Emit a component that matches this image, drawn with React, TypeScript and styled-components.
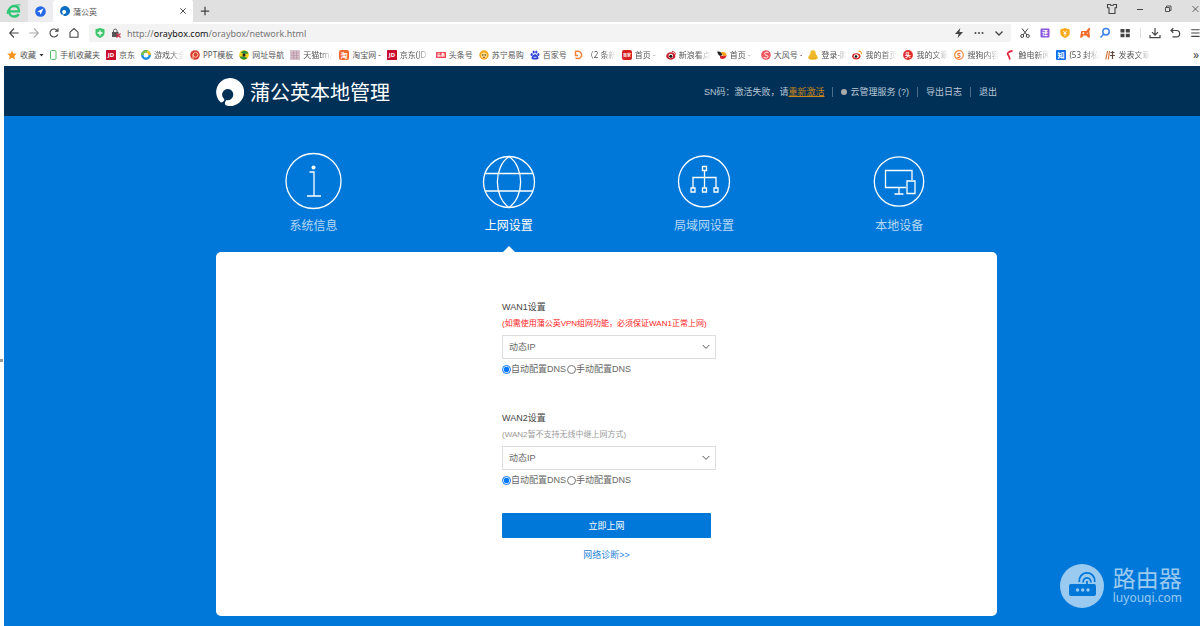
import React from "react";
import styled, { createGlobalStyle } from "styled-components";

const sans = `"Liberation Sans", "Noto Sans CJK SC", sans-serif`;
const ui = `"Noto Sans", "Noto Sans CJK SC", sans-serif`;

const GlobalStyle = createGlobalStyle`
  * { box-sizing: border-box; }
  body { margin: 0; background: #fff; font-family: ${sans}; }
  button, select, input { font-family: inherit; }
  h1, h2, p { margin: 0; font-weight: 400; }
`;

const Shell = styled.div`
  display: flex;
  flex-direction: column;
  min-height: 100vh;
  overflow-x: hidden;
`;

/* ---------- browser chrome ---------- */

const TabStrip = styled.div`
  display: flex;
  height: 22px;
  background: #e0e0e0;
  font-family: ${ui};
`;

const PlainButton = styled.button`
  display: flex;
  align-items: center;
  justify-content: center;
  padding: 0;
  border: 0;
  background: none;
  color: #444;
  flex-shrink: 0;
`;

const BrandButton = styled(PlainButton)`
  width: 28px;
`;

const PinnedTab = styled(PlainButton)`
  width: 25px;
  background: #ededf0;
`;

const ActiveTab = styled.div`
  display: flex;
  align-items: center;
  gap: 3px;
  width: 140px;
  padding: 0 6px 0 7px;
  background: #fff;
  color: #555;
  font-size: 8px;
  border-radius: 2px 2px 0 0;
`;

const TabTitle = styled.span`
  flex: 1;
`;

const NewTab = styled(PlainButton)`
  width: 24px;
`;

const WindowControls = styled.div`
  display: flex;
  margin-left: auto;
  height: 18px;
`;

const WindowButton = styled(PlainButton)<{ $edge?: boolean }>`
  width: ${(p) => (p.$edge ? 18 : 28)}px;
  justify-content: ${(p) => (p.$edge ? "flex-end" : "center")};
`;

const Toolbar = styled.div`
  display: flex;
  align-items: center;
  height: 22px;
  padding-left: 4px;
  background: #fff;
`;

const ToolButton = styled(PlainButton)<{ $edge?: boolean; $dim?: boolean }>`
  width: ${(p) => (p.$edge ? 15 : 20)}px;
  height: 20px;
  justify-content: ${(p) => (p.$edge ? "flex-end" : "center")};
  color: ${(p) => (p.$dim ? "#aaa" : "#444")};
`;

const AddressBar = styled.div`
  display: flex;
  align-items: center;
  flex: 1;
  height: 18px;
  margin: 0 4px 0 5px;
  padding: 0 2px 0 6px;
  gap: 6px;
  background: #f3f3f3;
  border-radius: 2px;
`;

const Url = styled.a`
  flex: 1;
  color: #777;
  font-family: ${ui};
  font-size: 9px;
  text-decoration: none;
  b {
    font-weight: 400;
    color: #111;
  }
`;

const AddressActions = styled.div`
  display: flex;
`;

const Divider = styled.span`
  width: 1px;
  height: 10px;
  margin: 0 4px 0 5px;
  background: #ddd;
`;

const Bookmarks = styled.nav`
  display: flex;
  align-items: center;
  gap: 6px;
  height: 22px;
  padding: 0 1px 0 7px;
  background: #fff;
  font-family: ${ui};
`;

const Bookmark = styled.a`
  display: flex;
  align-items: center;
  gap: 3px;
  flex-shrink: 0;
  color: #555;
  font-size: 8px;
  line-height: 12px;
  text-decoration: none;
  white-space: nowrap;
`;

const BookmarkName = styled.span<{ $fade?: number }>`
  overflow: hidden;
  ${(p) =>
    p.$fade &&
    `width: ${p.$fade}px; -webkit-mask-image: linear-gradient(90deg, #000 55%, transparent); mask-image: linear-gradient(90deg, #000 55%, transparent);`}
`;

const MoreBookmarks = styled(PlainButton)`
  margin-left: auto;
  font-size: 12px;
  line-height: 12px;
`;

/* ---------- router page ---------- */

const Viewport = styled.div`
  display: flex;
  flex: 1;
`;

const Gutter = styled.div`
  display: flex;
  align-items: center;
  width: 4px;
  padding-top: 28px;
  background: #fff;
`;

const Grip = styled.span`
  width: 3px;
  height: 3px;
  background: #999;
`;

const Site = styled.div`
  position: relative;
  display: flex;
  flex-direction: column;
  flex: 1;
  background: #0078d9;
`;

const Header = styled.header`
  height: 50px;
  padding-left: 9px;
  background: #003056;
`;

const Container = styled.div`
  width: 100%;
  max-width: 781px;
  margin: 0 auto;
`;

const HeaderRow = styled(Container)`
  display: flex;
  align-items: center;
  justify-content: space-between;
  height: 50px;
  padding-top: 2px;
`;

const Brand = styled.div`
  display: flex;
  align-items: center;
  gap: 6px;
  color: #fff;
`;

const BrandName = styled.h1`
  font-family: "Noto Sans CJK SC", sans-serif;
  font-size: 20px;
  line-height: 28px;
  font-weight: 400;
`;

const HeaderLinks = styled.div`
  display: flex;
  align-items: center;
  gap: 8px;
  color: #b9c8d6;
  font-size: 9px;
  line-height: 16px;
  white-space: nowrap;
`;

const HeaderLink = styled.a`
  display: flex;
  align-items: center;
  gap: 3px;
  color: inherit;
  text-decoration: none;
`;

const Retry = styled.a`
  color: #c8861a;
  text-decoration: underline;
`;

const Pipe = styled.span`
  width: 1px;
  height: 10px;
  background: #4d6e8a;
`;

const Dot = styled.span`
  width: 6px;
  height: 6px;
  border-radius: 50%;
  background: #aaa;
`;

const Main = styled.main`
  padding: 0 0 10px 9px;
`;

const Tabs = styled.nav`
  display: grid;
  grid-template-columns: repeat(4, 1fr);
`;

const TabLink = styled.a<{ $active?: boolean }>`
  position: relative;
  display: flex;
  flex-direction: column;
  align-items: center;
  gap: 8px;
  padding: 36px 0 18px;
  color: ${(p) => (p.$active ? "#fff" : "#b5d8f6")};
  font-size: 12px;
  line-height: 16px;
  text-decoration: none;
  svg {
    color: #fff;
  }
  &::after {
    content: "";
    display: ${(p) => (p.$active ? "block" : "none")};
    position: absolute;
    bottom: 0;
    border: 6px solid transparent;
    border-top-width: 0;
    border-bottom-color: #fff;
  }
`;

const Card = styled.div`
  padding: 47px 0 53px;
  background: #fff;
  border-radius: 5px;
`;

const Form = styled.form`
  width: 209px;
  margin: 0 auto;
  color: #666;
  font-size: 9px;
  line-height: 16px;
`;

const Group = styled.section`
  & + & {
    margin-top: 31px;
  }
`;

const GroupTitle = styled.h2`
  color: #444;
  font-size: 9px;
  line-height: 16px;
`;

const Hint = styled.p<{ $warn?: boolean }>`
  color: ${(p) => (p.$warn ? "#ff1a1a" : "#999")};
  font-size: 8px;
  line-height: 18px;
  white-space: nowrap;
`;

const SelectBox = styled.div`
  position: relative;
  width: 214px;
  margin-top: 2px;
  svg {
    position: absolute;
    right: 6px;
    top: 9px;
    pointer-events: none;
  }
`;

const Select = styled.select`
  display: block;
  appearance: none;
  width: 100%;
  height: 24px;
  padding: 0 6px;
  border: 1px solid #ddd;
  border-radius: 0;
  background: #fff;
  color: #666;
  font-size: 9px;
`;

const Radios = styled.div`
  display: flex;
  align-items: center;
  gap: 1px;
  height: 20px;
`;

const RadioLabel = styled.label`
  display: flex;
  align-items: center;
  white-space: nowrap;
`;

const Radio = styled.input`
  width: 9px;
  height: 9px;
  margin: 0;
  accent-color: #0075ff;
`;

const Submit = styled.button`
  display: block;
  width: 100%;
  height: 25px;
  margin-top: 23px;
  padding: 0;
  border: 0;
  border-radius: 1px;
  background: #0078d9;
  color: #fff;
  font-size: 9px;
`;

const Diagnose = styled.a`
  display: block;
  margin-top: 9px;
  color: #2a86d8;
  text-align: center;
  text-decoration: none;
`;

const Watermark = styled.div`
  position: absolute;
  right: 18px;
  bottom: 18px;
  display: flex;
  align-items: center;
  gap: 9px;
  color: #9bcaf1;
`;

const WatermarkText = styled.div`
  display: flex;
  flex-direction: column;
  padding-bottom: 3px;
  font-family: ${ui};
`;

const WatermarkName = styled.span`
  font-size: 23px;
  line-height: 26px;
`;

const WatermarkHost = styled.span`
  font-size: 12px;
  line-height: 14px;
`;

/* ---------- drawings ---------- */

const line = { fill: "none", stroke: "currentColor" } as const;

const Glyph = ({ size = 12, w = 1.1, children }: { size?: number; w?: number; children: React.ReactNode }) => (
  <svg width={size} height={size} viewBox="0 0 12 12" {...line} strokeWidth={w} aria-hidden="true">
    {children}
  </svg>
);

const OrayMark = ({ size, color }: { size: number; color: string }) => (
  <svg width={size} height={size} viewBox="0 0 28 28" aria-hidden="true">
    <path
      fill={color}
      d="M4.800 24.500A14 14 0 1 1 10.500 27.600C9.300 27 8.600 25.800 9 24.300L10.300 22A5.600 5.600 0 1 0 7 19.600L8.300 21.300C8.500 23 7 24.500 4.800 24.500z"
    />
  </svg>
);

type MarkName =
  | "star" | "phone" | "jd" | "ring" | "ppt" | "hao" | "tmall" | "tao" | "toutiao" | "lion"
  | "paw" | "dring" | "redbox" | "eye" | "fox" | "swirl" | "bell" | "weibo" | "redcircle"
  | "sogou" | "touch" | "zhi" | "publish";

const glyphText = (s: string, size: number, y: number, fill = "#fff") => (
  <text x="5" y={y} fontSize={size} fill={fill} textAnchor="middle" fontWeight="700">{s}</text>
);

const marks: Record<MarkName, React.ReactNode> = {
  star: <path fill="#f7931e" d="M5 .4l1.400 3 3.300.4-2.400 2.300.6 3.300L5 7.800 2.100 9.400l.6-3.300L.3 3.800l3.300-.4z" />,
  phone: <rect x="1.500" y=".6" width="5.500" height="8.800" rx="1" fill="none" stroke="#58b96b" />,
  jd: <><rect width="10" height="10" rx=".6" fill="#c8102e" />{glyphText("JD", 6, 7.3)}</>,
  ring: <><circle cx="5" cy="5" r="3.700" fill="none" stroke="#1e90e8" strokeWidth="2.400" /><path d="M1.300 5a3.700 3.700 0 0 1 5.500-3.200" fill="none" stroke="#7cc142" strokeWidth="2.400" /><path d="M6 1.500A3.700 3.700 0 0 1 8.700 5" fill="none" stroke="#f9c21b" strokeWidth="2.400" /></>,
  ppt: <><circle cx="5" cy="5" r="4.800" fill="#d93c33" /><circle cx="5.500" cy="4.800" r="2.400" fill="none" stroke="#ffc9a0" /><path d="M3 9V4" stroke="#ffc9a0" /></>,
  hao: <><circle cx="5" cy="5" r="4.800" fill="#f5cf1c" /><path d="M.5 6.500C2 10 6 10.500 8 8L5.500 6.500z" fill="#2c8f3c" /><path d="M9.500 3.500C8 0 4 0 2 2.500L4.500 4z" fill="#2c8f3c" /><circle cx="5" cy="5" r="1.500" fill="#222" /></>,
  tmall: <><rect width="10" height="10" fill="#d8c3cc" /><path d="M1 3h8M1 5.500h8M1 8h8M3.500 1v8M6.500 1v8" stroke="#b694a4" strokeWidth=".7" /></>,
  tao: <><rect width="10" height="10" rx="2" fill="#f2662b" />{glyphText("淘", 7, 7.700)}</>,
  toutiao: <><rect y="2" width="10" height="6" rx=".5" fill="#ee4350" />{glyphText("头条", 4, 6.500)}</>,
  lion: <><circle cx="5" cy="5" r="4.700" fill="#f6a81c" /><circle cx="5" cy="5.500" r="3" fill="#ffe08a" /><circle cx="3.800" cy="5" r=".7" fill="#222" /><circle cx="6.200" cy="5" r=".7" fill="#222" /><path d="M4 7.300h2" stroke="#b3392b" /></>,
  paw: <g fill="#2d43d8"><ellipse cx="1.700" cy="4.500" rx="1.100" ry="1.500" /><ellipse cx="3.700" cy="2" rx="1.100" ry="1.500" /><ellipse cx="6.300" cy="2" rx="1.100" ry="1.500" /><ellipse cx="8.300" cy="4.500" rx="1.100" ry="1.500" /><path d="M5 4.200c1.500 0 3.500 2.300 3.500 3.800S7 9.600 5 9.600 1.500 9.500 1.500 8 3.500 4.200 5 4.200z" /><path d="M3.500 7.300h3" stroke="#fff" strokeWidth=".8" /></g>,
  dring: <path d="M2 1.200h3a3.700 3.700 0 1 1-2.500 6.500M2.500 1.500v4h2.500" fill="none" stroke="#f0823a" strokeWidth="1.500" />,
  redbox: <><rect width="10" height="10" rx="2" fill="#d81e1e" />{glyphText("百家", 4, 6.500)}</>,
  eye: <><ellipse cx="4.800" cy="6" rx="4.600" ry="3.700" fill="#c2202b" /><circle cx="4.800" cy="6" r="2.300" fill="#fff" /><circle cx="4.800" cy="6.200" r="1.500" fill="#111" /><path d="M6 1.500c2 0 3.500 1 3.500 3" fill="none" stroke="#c2202b" /></>,
  fox: <><path d="M.3 1.500C3 1 5 2.500 5.500 5L3 6C1.500 5 .5 3.500.3 1.500z" fill="#222" /><path d="M4 2.500c3-1.500 6 .5 5.700 3.300L6 6z" fill="#f7a51c" /><path d="M3 6l6.500-.3C9 8.500 5.500 10 3 8z" fill="#d8262c" /></>,
  swirl: <><circle cx="5" cy="5" r="4.800" fill="#ef5560" /><path d="M7.500 2.500C5 1.500 3 3 4 4.500s3 .5 3 2S4.500 8.500 2.500 7.300" fill="none" stroke="#fff" /></>,
  bell: <><path d="M5 .3c1.900 0 2.700 1.300 2.700 3 0 1.800 2.100 2.500 2.100 4.400 0 1.400-1.800 2-4.800 2S.2 9.100.2 7.700c0-1.900 2.100-2.600 2.100-4.400 0-1.700.8-3 2.700-3z" fill="#f0b929" /><path d="M1.500 8h7" stroke="#dc9d1a" strokeWidth=".7" /></>,
  weibo: <><ellipse cx="4.300" cy="6.300" rx="4.200" ry="3.100" fill="#d92b2b" /><ellipse cx="4.300" cy="6.300" rx="2.500" ry="2" fill="#fff" /><circle cx="4" cy="6.500" r="1.300" fill="#111" /><path d="M6.500 1.200c2-.3 3.200 1 2.900 3" fill="none" stroke="#f29b1d" strokeWidth="1.100" /></>,
  redcircle: <><circle cx="5" cy="5" r="4.900" fill="#e02c2c" />{glyphText("头", 6, 7.200)}</>,
  sogou: <><circle cx="5" cy="5" r="4.300" fill="#fff" stroke="#f58a3c" strokeWidth="1.200" />{glyphText("S", 7, 7.500, "#f26a1b")}</>,
  touch: <path d="M7.500.8C3 1.500 1.500 4 3.500 5.300L5 9.500" fill="none" stroke="#e2243b" strokeWidth="1.700" />,
  zhi: <><rect width="10" height="10" rx="1" fill="#0f6ff0" />{glyphText("知", 7, 7.700)}</>,
  publish: <><path d="M2.500 1L.8 9.500M4.500 1L3.300 9.500" fill="none" stroke="#d9773f" strokeWidth="1.200" /><path d="M5.500 2.500h4M7.500 1v8M5 5.500h5" fill="none" stroke="#5f4a44" strokeWidth="1.200" /></>,
};

/* widths at which a long bookmark name fades out */
const short = 25;
const medium = 30;
const long = 32;

const bookmarks: { mark: MarkName; name: string; fade?: number }[] = [
  { mark: "jd", name: "京东" },
  { mark: "ring", name: "游戏大全", fade: medium },
  { mark: "ppt", name: "PPT模板" },
  { mark: "hao", name: "网址导航" },
  { mark: "tmall", name: "天猫tma", fade: medium },
  { mark: "tao", name: "淘宝网 -" },
  { mark: "jd", name: "京东(JD", fade: medium },
  { mark: "toutiao", name: "头条号" },
  { mark: "lion", name: "苏宁易购" },
  { mark: "paw", name: "百家号" },
  { mark: "dring", name: "（2 条新", fade: medium },
  { mark: "redbox", name: "首页 -", fade: short },
  { mark: "eye", name: "新浪看点", fade: long },
  { mark: "fox", name: "首页 -", fade: short },
  { mark: "swirl", name: "大风号 -" },
  { mark: "bell", name: "登录-腾", fade: short },
  { mark: "weibo", name: "我的首页", fade: long },
  { mark: "redcircle", name: "我的文章", fade: long },
  { mark: "sogou", name: "搜狗内容", fade: long },
  { mark: "touch", name: "触电新闻", fade: long },
  { mark: "zhi", name: "(53 封私", fade: medium },
  { mark: "publish", name: "发表文章", fade: long },
];

const Favicon = ({ mark, narrow }: { mark: MarkName; narrow?: boolean }) => (
  <svg width={narrow ? 7 : 10} height="10" viewBox={narrow ? "1 0 7 10" : "0 0 10 10"} aria-hidden="true">
    {marks[mark]}
  </svg>
);

const Chevron = () => (
  <svg width="8" height="6" viewBox="0 0 8 6" {...line} stroke="#555" aria-hidden="true">
    <path d="M.7 1L4 4.400 7.300 1" />
  </svg>
);

const navIcon = { width: 58, height: 58, viewBox: "0 0 58 58", ...line, strokeWidth: 1.3, "aria-hidden": true } as const;

const sections = [
  {
    name: "系统信息",
    icon: (
      <svg {...navIcon}>
        <circle cx="28.500" cy="29" r="27.500" />
        <circle cx="28.500" cy="15.500" r="2" fill="currentColor" stroke="none" />
        <path d="M24.500 20H29v24M22 44h14" />
      </svg>
    ),
  },
  {
    name: "上网设置",
    active: true,
    icon: (
      <svg {...navIcon}>
        <circle cx="29" cy="30" r="25.500" />
        <path d="M29 4.500C13.500 15 13.500 45 29 55.500M29 4.500C44.500 15 44.500 45 29 55.500M5 21.500h48M5 39h48" />
      </svg>
    ),
  },
  {
    name: "局域网设置",
    icon: (
      <svg {...navIcon}>
        <circle cx="29" cy="29.500" r="25.500" />
        <path d="M27.500 14.500h4v4h-4zM16 36h4v4h-4zM27.500 36h4v4h-4zM39 36h4v4h-4zM29.500 18.500V36M18 36V25.500h23V36" />
      </svg>
    ),
  },
  {
    name: "本地设备",
    icon: (
      <svg {...navIcon}>
        <circle cx="29" cy="29.500" r="24.700" />
        <path d="M36 35.500H15.500v-17H42v9.500M29 35.500V42M24.500 42h9M37 29h8v12.500h-8z" />
      </svg>
    ),
  },
];

const wans = [
  { id: "wan1", title: "WAN1设置", hint: "(如需使用蒲公英VPN组网功能，必须保证WAN1正常上网)", warn: true },
  { id: "wan2", title: "WAN2设置", hint: "(WAN2暂不支持无线中继上网方式)", warn: false },
];

const Browser = () => (
  <>
    <TabStrip>
      <BrandButton aria-label="浏览器">
        <svg width="16" height="16" viewBox="0 0 16 16" fill="none" stroke="#2dc672" aria-hidden="true">
          <path d="M3 8.300h10C13 4.800 11 3 8.200 3 5.200 3 3 5.200 3 8.200s2.200 5.300 5.200 5.300c2 0 3.600-.8 4.500-2.400" strokeWidth="2.300" />
          <path d="M1.500 11C0 7 7 .5 14.500 2" strokeWidth="1.200" />
        </svg>
      </BrandButton>
      <PinnedTab aria-label="导航">
        <svg width="11" height="11" viewBox="0 0 11 11" aria-hidden="true">
          <circle cx="5.500" cy="5.500" r="5.300" fill="#2567e8" />
          <path d="M8.500 2.500L2.300 5.400l2.500.8.8 2.500z" fill="#fff" />
        </svg>
      </PinnedTab>
      <ActiveTab>
        <OrayMark size={10} color="#0d6fc4" />
        <TabTitle>蒲公英</TabTitle>
        <PlainButton aria-label="关闭标签"><Glyph size={8} w={1.400}><path d="M2 2l8 8M10 2l-8 8" /></Glyph></PlainButton>
      </ActiveTab>
      <NewTab aria-label="新标签"><Glyph size={10} w={1.500}><path d="M6 1v10M1 6h10" /></Glyph></NewTab>
      <WindowControls>
        <WindowButton aria-label="皮肤"><Glyph><path d="M1.500 1.500h2.700c.5 1.400 3 1.400 3.600 0h2.700v3.200H9v5.800H3V4.700H1.500z" /></Glyph></WindowButton>
        <WindowButton aria-label="最小化"><Glyph w={1}><path d="M3 6.500h6" /></Glyph></WindowButton>
        <WindowButton aria-label="还原"><Glyph w={0.900}><path d="M3.500 4.500h4v4h-4zM4.500 4.500v-1.500h4.500v4.500h-1.500" /></Glyph></WindowButton>
        <WindowButton $edge aria-label="关闭"><Glyph size={10} w={1}><path d="M3 2.500l7 7M10 2.500l-7 7" /></Glyph></WindowButton>
      </WindowControls>
    </TabStrip>
    <Toolbar>
      <ToolButton aria-label="后退"><Glyph><path d="M6 1.500L1.700 6 6 10.500M1.700 6h9" /></Glyph></ToolButton>
      <ToolButton $dim aria-label="前进"><Glyph><path d="M6 1.500L10.300 6 6 10.500M10.300 6h-9" /></Glyph></ToolButton>
      <ToolButton aria-label="刷新"><Glyph><path d="M9.700 7.500A4 4 0 1 1 9.300 3.700M10 1.200v3H7" /></Glyph></ToolButton>
      <ToolButton aria-label="主页"><Glyph><path d="M2 10.300V5.200L6 1.500l4 3.700v5.100z" /></Glyph></ToolButton>
      <AddressBar>
        <svg width="10" height="10" viewBox="0 0 10 10" aria-hidden="true">
          <path d="M5 0l4.500 1.200v4C9.500 7.700 7 9.300 5 10 3 9.300.5 7.700.5 5.200v-4z" fill="#3fc66c" />
          <path d="M5 2.500v5M2.500 5h5" stroke="#fff" strokeWidth="1.300" />
        </svg>
        <svg width="10" height="10" viewBox="0 0 10 10" aria-hidden="true">
          <rect x="1" y="4" width="6.500" height="5" fill="#555" />
          <path d="M2.500 4V2.500a1.800 1.800 0 0 1 3.500 0V4" fill="none" stroke="#555" />
          <path d="M5.500 5.500l4 4M9.500 5.500l-4 4" stroke="#d8344c" strokeWidth="1.200" />
        </svg>
        <Url href="#">http://<b>oraybox.com</b>/oraybox/network.html</Url>
        <AddressActions>
          <ToolButton aria-label="极速模式"><Glyph><path d="M7.300 1L2 7h3.500L4.700 11 10 5H6.500z" fill="currentColor" stroke="none" /></Glyph></ToolButton>
          <ToolButton aria-label="更多"><Glyph><g fill="currentColor" stroke="none"><circle cx="2.500" cy="6" r="1" /><circle cx="6" cy="6" r="1" /><circle cx="9.500" cy="6" r="1" /></g></Glyph></ToolButton>
          <ToolButton aria-label="展开"><Glyph w={1.300}><path d="M2.500 4.500L6 8l3.500-3.500" /></Glyph></ToolButton>
        </AddressActions>
      </AddressBar>
      <ToolButton aria-label="截图"><Glyph w={1}><path d="M3 1.500L8 8M9 1.500L4 8" /><circle cx="3.200" cy="9" r="1.500" /><circle cx="8.800" cy="9" r="1.500" /></Glyph></ToolButton>
      <ToolButton aria-label="翻译">
        <svg width="10" height="10" viewBox="0 0 10 10" aria-hidden="true"><rect x=".5" y=".5" width="9" height="9" rx="1" fill="#8a55dd" />{glyphText("译", 6, 7.200)}</svg>
      </ToolButton>
      <ToolButton aria-label="安全">
        <svg width="10" height="10" viewBox="0 0 10 10" aria-hidden="true"><path d="M5 0l4.700 1.500v3.700C9.700 7.600 7 9.300 5 10 3 9.300.3 7.600.3 5.200V1.500z" fill="#f9a91b" /><path d="M3.200 2.800L5 5l1.800-2.200M5 5v3M3.500 5.500h3" fill="none" stroke="#fff" strokeWidth=".9" /></svg>
      </ToolButton>
      <ToolButton aria-label="游戏">
        <svg width="12" height="12" viewBox="0 0 12 12" aria-hidden="true"><path d="M1 10.500L2.300 4h5L9.500 1.200h2L10.300 4l.7 6.500H9L7.500 8.500h-3L3 10.500z" fill="#f26522" /><path d="M3.200 6.200h2.400M4.400 5v2.400M7.700 6.200h1.500" stroke="#fff" strokeWidth=".8" /></svg>
      </ToolButton>
      <ToolButton aria-label="搜索"><Glyph><g stroke="#3b82ec" strokeWidth="1.500"><circle cx="7" cy="4.700" r="3.200" /><path d="M4.600 7.200L1.500 10.500" /></g></Glyph></ToolButton>
      <ToolButton aria-label="应用"><Glyph><path d="M1.500 2h4v3.500h-4zM6.800 2h4v3.500h-4zM1.500 6.800h4v3.500h-4zM6.800 6.800h4v3.500h-4z" fill="currentColor" stroke="none" /></Glyph></ToolButton>
      <Divider />
      <ToolButton aria-label="下载"><Glyph w={1.200}><path d="M6 1v7M3 5.200L6 8.200l3-3M1 8v2.700h10V8" /></Glyph></ToolButton>
      <ToolButton aria-label="恢复"><Glyph w={1.200}><path d="M4.300 1.300L2 3.500l2.300 2.200M2 3.500h5.500a3 3 0 0 1 0 6.300H3.500" /></Glyph></ToolButton>
      <ToolButton $edge aria-label="菜单"><Glyph size={10} w={1.300}><path d="M1.500 2h10M1.500 6h10M1.500 10h10" /></Glyph></ToolButton>
    </Toolbar>
    <Bookmarks aria-label="收藏">
      <Bookmark href="#">
        <Favicon mark="star" />
        <span>收藏</span>
        <svg width="5" height="4" viewBox="0 0 5 4" aria-hidden="true"><path d="M.5 1h4L2.500 3.500z" fill="#333" /></svg>
      </Bookmark>
      <Bookmark href="#"><Favicon mark="phone" narrow /><span>手机收藏夹</span></Bookmark>
      {bookmarks.map((b, i) => (
        <Bookmark href="#" key={i}>
          <Favicon mark={b.mark} />
          <BookmarkName $fade={b.fade}>{b.name}</BookmarkName>
        </Bookmark>
      ))}
      <MoreBookmarks aria-label="更多收藏">»</MoreBookmarks>
    </Bookmarks>
  </>
);

export default function App() {
  return (
    <Shell>
      <GlobalStyle />
      <Browser />
      <Viewport>
        <Gutter><Grip /></Gutter>
        <Site>
          <Header>
            <HeaderRow>
              <Brand>
                <OrayMark size={28} color="#fff" />
                <BrandName>蒲公英本地管理</BrandName>
              </Brand>
              <HeaderLinks>
                <span>SN码：激活失败，请<Retry href="#">重新激活</Retry></span>
                <Pipe />
                <HeaderLink href="#"><Dot />云管理服务 (?)</HeaderLink>
                <Pipe />
                <HeaderLink href="#">导出日志</HeaderLink>
                <Pipe />
                <HeaderLink href="#">退出</HeaderLink>
              </HeaderLinks>
            </HeaderRow>
          </Header>
          <Main>
            <Container>
              <Tabs>
                {sections.map((s) => (
                  <TabLink href="#" key={s.name} $active={s.active}>
                    {s.icon}
                    {s.name}
                  </TabLink>
                ))}
              </Tabs>
              <Card>
                <Form onSubmit={(e) => e.preventDefault()}>
                  {wans.map((w) => (
                    <Group key={w.id}>
                      <GroupTitle id={w.id}>{w.title}</GroupTitle>
                      <Hint $warn={w.warn}>{w.hint}</Hint>
                      <SelectBox>
                        <Select aria-labelledby={w.id} defaultValue="dhcp">
                          <option value="dhcp">动态IP</option>
                        </Select>
                        <Chevron />
                      </SelectBox>
                      <Radios role="radiogroup" aria-labelledby={w.id}>
                        <RadioLabel><Radio type="radio" name={w.id} defaultChecked />自动配置DNS</RadioLabel>
                        <RadioLabel><Radio type="radio" name={w.id} />手动配置DNS</RadioLabel>
                      </Radios>
                    </Group>
                  ))}
                  <Submit type="submit">立即上网</Submit>
                  <Diagnose href="#">网络诊断&gt;&gt;</Diagnose>
                </Form>
              </Card>
            </Container>
          </Main>
          <Watermark>
            <svg width="44" height="44" viewBox="0 0 44 44" aria-hidden="true">
              <circle cx="22" cy="22" r="22" fill="#9bcaf1" />
              <rect x="9" y="20" width="27" height="12" rx="2" fill="#0078d9" />
              <g fill="none" stroke="#0078d9" strokeWidth="1.800">
                <path d="M27 20v-3M23.300 18.500a3.800 3.800 0 1 1 7.400 0M19.300 18a7.800 7.800 0 1 1 15.400 0" />
              </g>
              <g fill="#9bcaf1"><circle cx="17.500" cy="26" r="1.700" /><circle cx="22.700" cy="26" r="1.700" /><circle cx="28" cy="26" r="1.700" /></g>
            </svg>
            <WatermarkText>
              <WatermarkName>路由器</WatermarkName>
              <WatermarkHost>luyouqi.com</WatermarkHost>
            </WatermarkText>
          </Watermark>
        </Site>
      </Viewport>
    </Shell>
  );
}
